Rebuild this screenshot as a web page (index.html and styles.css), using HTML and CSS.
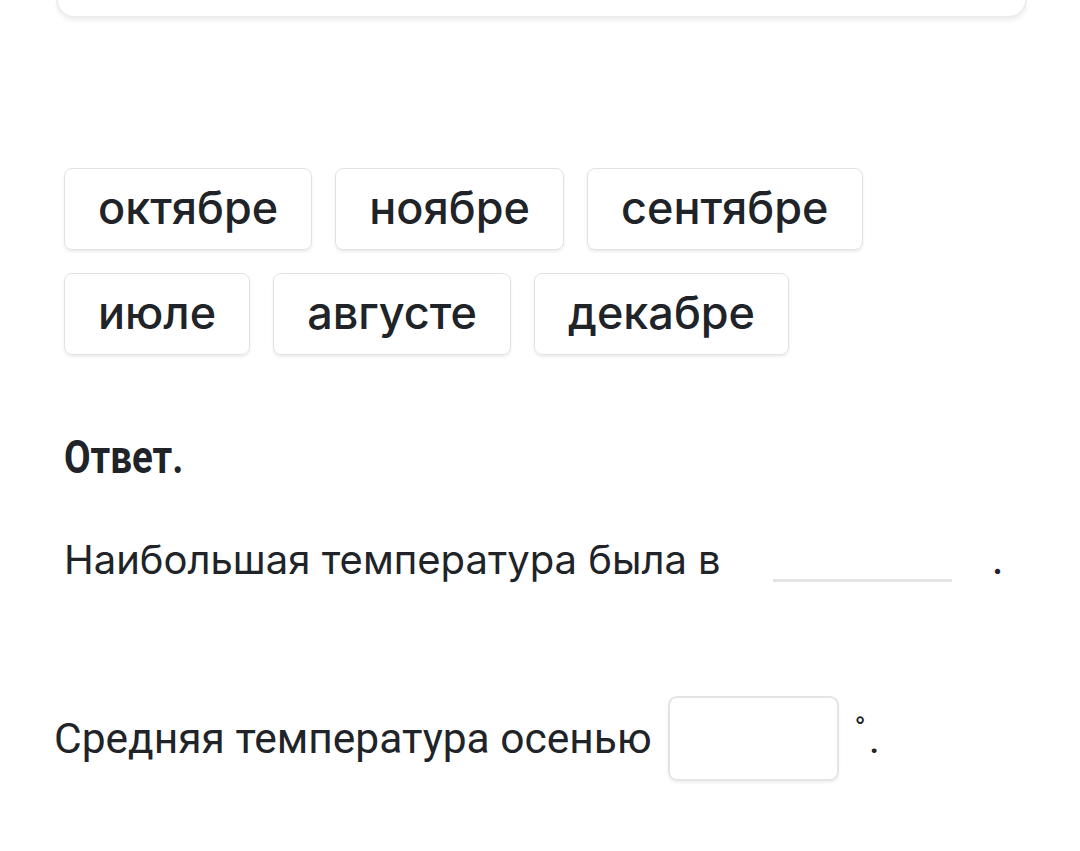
FILE: index.html
```html
<!DOCTYPE html>
<html lang="ru">
<head>
<meta charset="utf-8">
<link rel="stylesheet" href="styles.css">
</head>
<body>
<div class="card"></div>
<div class="chips">
  <div class="chip-row">
    <div class="chip">октябре</div>
    <div class="chip">ноябре</div>
    <div class="chip">сентябре</div>
  </div>
  <div class="chip-row">
    <div class="chip">июле</div>
    <div class="chip">августе</div>
    <div class="chip">декабре</div>
  </div>
</div>
<div class="answer">
  <div class="answer-title"><span class="title-text">Ответ.</span></div>
  <div class="line1">
    <span class="txt">Наибольшая температура была в</span>
    <span class="blank"></span>
    <span class="dot">.</span>
  </div>
  <div class="line2">
    <span class="txt2">Средняя температура осенью</span>
    <span class="box"></span>
    <span class="deg">°</span>
    <span class="dot2">.</span>
  </div>
</div>
</body>
</html>
```
FILE: styles.css
```css
html, body { margin: 0; padding: 0; background: #fff; }
body { width: 1080px; height: 851px; overflow: hidden; color: #202327; font-family: "Inter", "Liberation Sans", sans-serif; }
.card {
  margin: 0 53px 0 56px;
  height: 16px;
  border: 2px solid #ececec;
  border-top: none;
  border-radius: 0 0 22px 22px;
  box-shadow: 0 3px 4px rgba(0,0,0,0.06);
}
.chips { padding: 150px 0 0 64px; display: flex; flex-direction: column; gap: 23px; }
.chip-row { display: flex; gap: 23px; }
.chip {
  height: 82px;
  box-sizing: border-box;
  padding: 0 33px 4px;
  border: 1.5px solid #e2e2e2;
  border-radius: 8px;
  box-shadow: 0 2px 3px rgba(0,0,0,0.08);
  display: flex; align-items: center;
  font-size: 45px;
  font-weight: 500;
}
.answer { padding-left: 64px; }
.answer-title { margin-top: 76px; font-family: "Roboto", sans-serif; font-weight: 700; font-size: 47px; line-height: 52px; }
.title-text { display: inline-block; transform: scaleX(0.82); transform-origin: left center; }
.line1 { margin-top: 52px; display: flex; align-items: baseline; font-size: 40px; }
.blank { display: inline-block; width: 179px; height: 3px; background: #e4e4e4; margin-left: 52px; position: relative; top: 8px; }
.dot { margin-left: 40px; }
.line2 { margin-top: 112px; margin-left: -10px; display: flex; align-items: center; font-family: "Roboto", sans-serif; font-size: 42.5px; }
.box { width: 171px; height: 85px; box-sizing: border-box; border: 2px solid #e4e4e4; border-radius: 9px; box-shadow: 0 2px 3px rgba(0,0,0,0.06); margin-left: 16px; }
.deg { font-size: 30px; align-self: flex-start; margin-left: 16px; margin-top: 14px; }
.dot2 { margin-left: 3px; }
```
